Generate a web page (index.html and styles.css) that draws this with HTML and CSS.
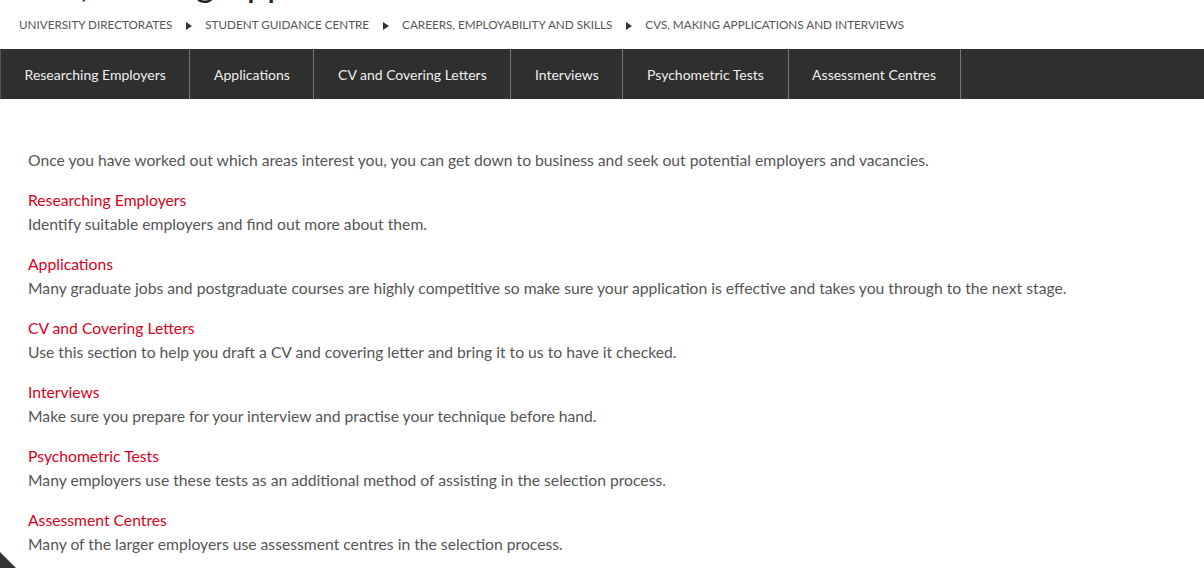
FILE: index.html
```html
<!DOCTYPE html>
<html lang="en">
<head>
    <meta charset="UTF-8">
    <meta name="viewport" content="width=device-width, initial-scale=1.0">
    <title>CVs, Making Applications and Interviews</title>
    <link rel="stylesheet" href="styles.css">
</head>
<body>
    <header class="page-header">
        <h1 class="page-title">CVs, Making Applications and Interviews</h1>
        <ol class="breadcrumb">
            <li><a href="#">University Directorates</a></li>
            <li><a href="#">Student Guidance Centre</a></li>
            <li><a href="#">Careers, Employability and Skills</a></li>
            <li><a href="#">CVs, Making Applications and Interviews</a></li>
        </ol>
    </header>

    <nav class="section-nav">
        <a href="#">Researching Employers</a>
        <a href="#">Applications</a>
        <a href="#">CV and Covering Letters</a>
        <a href="#">Interviews</a>
        <a href="#">Psychometric Tests</a>
        <a href="#">Assessment Centres</a>
    </nav>

    <main class="content">
        <p class="intro">Once you have worked out which areas interest you, you can get down to business and seek out potential employers and vacancies.</p>

        <div class="topic">
            <a href="#">Researching Employers</a>
            <p>Identify suitable employers and find out more about them.</p>
        </div>
        <div class="topic">
            <a href="#">Applications</a>
            <p>Many graduate jobs and postgraduate courses are highly competitive so make sure your application is effective and takes you through to the next stage.</p>
        </div>
        <div class="topic">
            <a href="#">CV and Covering Letters</a>
            <p>Use this section to help you draft a CV and covering letter and bring it to us to have it checked.</p>
        </div>
        <div class="topic">
            <a href="#">Interviews</a>
            <p>Make sure you prepare for your interview and practise your technique before hand.</p>
        </div>
        <div class="topic">
            <a href="#">Psychometric Tests</a>
            <p>Many employers use these tests as an additional method of assisting in the selection process.</p>
        </div>
        <div class="topic">
            <a href="#">Assessment Centres</a>
            <p>Many of the larger employers use assessment centres in the selection process.</p>
        </div>
    </main>

    <a href="#" class="corner-tab" aria-label="Back to top"></a>
</body>
</html>
```

FILE: styles.css
```css
body {
    margin: 0;
    font-family: Lato, "Open Sans", Arial, sans-serif;
    color: #555;
    background: white;
}
a {
    text-decoration: none;
}
.page-header {
    padding: 0 19px;
}
.page-title {
    margin: -37px 0 0;
    font-size: 36px;
    line-height: 40px;
    font-weight: 400;
    color: #222;
    white-space: nowrap;
}
.breadcrumb {
    display: flex;
    margin: 13px 0 0;
    padding: 0;
    list-style: none;
    font-size: 11.7px;
    line-height: 16px;
    text-transform: uppercase;
}
.breadcrumb li + li::before {
    content: "";
    display: inline-block;
    margin: 0 13px 1px 14px;
    border-left: 6px solid #333;
    border-top: 4px solid transparent;
    border-bottom: 4px solid transparent;
    vertical-align: middle;
}
.breadcrumb a {
    color: #555;
}
.section-nav {
    display: flex;
    margin-top: 17px;
    height: 50px;
    background: #2f2f2f;
    border-left: 1px solid #555;
}
.section-nav a {
    display: flex;
    align-items: center;
    padding: 0 23.6px;
    font-size: 14px;
    color: #eee;
    border-right: 1px solid #777;
}
.content {
    padding: 49px 28px 0;
    font-size: 15.7px;
    line-height: 24px;
}
.intro {
    margin: 0 0 16px;
}
.topic {
    margin-bottom: 16px;
}
.topic a {
    color: #d9001b;
}
.topic p {
    margin: 0;
}
.corner-tab {
    position: fixed;
    left: 0;
    bottom: 0;
    width: 16px;
    height: 16px;
    background: #333;
    clip-path: polygon(0 0, 100% 100%, 0 100%);
}
```
